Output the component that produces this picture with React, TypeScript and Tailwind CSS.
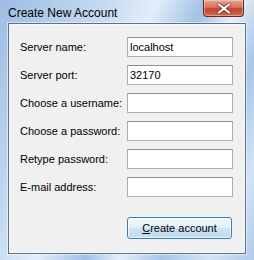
import React from 'react';

const rows: { label: string; value: string }[] = [
  { label: 'Server name:', value: 'localhost' },
  { label: 'Server port:', value: '32170' },
  { label: 'Choose a username:', value: '' },
  { label: 'Choose a password:', value: '' },
  { label: 'Retype password:', value: '' },
  { label: 'E-mail address:', value: '' },
];

const CloseButton = () => (
  <div className="absolute top-0 right-[10px] w-[41px] h-[17px] rounded-b-[4px] border border-t-0 border-[#6b2a22] bg-[linear-gradient(180deg,#e8a392_0%,#d8735f_45%,#c0442c_55%,#cf6a4f_100%)] flex items-center justify-center shadow-[inset_0_0_0_1px_rgba(255,255,255,0.35)]">
    <svg width="14" height="11" viewBox="0 0 14 11">
      <path d="M2 1.5 L12 9.5 M12 1.5 L2 9.5" stroke="#7a3a2e" strokeWidth="3.6" strokeLinecap="round" />
      <path d="M2 1.5 L12 9.5 M12 1.5 L2 9.5" stroke="#ffffff" strokeWidth="2.2" strokeLinecap="round" />
    </svg>
  </div>
);

export default function App() {
  return (
    <div
      className="relative w-[254px] h-[260px] overflow-hidden flex flex-col bg-[linear-gradient(115deg,#9dbde3_0%,#c4d9f1_28%,#e2edf9_42%,#a2c1e5_55%,#e4eef9_64%,#a8c6e8_75%,#d4e4f5_88%,#b0cbeb_100%)]"
      style={{ fontFamily: '"Liberation Sans", Arial, sans-serif' }}
    >
      <div className="h-[23px] shrink-0 flex items-center pl-[8px] pt-[2px] text-[12px] text-black">
        Create New Account
      </div>
      <CloseButton />

      <div className="mx-[8px] flex-1 border border-[#5d6f86] mb-[6px] shadow-[0_0_0_1px_rgba(255,255,255,0.5)]">
        <div className="h-full bg-[#f0f0f0] border border-[#f8f8f8] pt-[12px] pl-[10px] flex flex-col text-[11px] text-black">
          <div className="flex flex-col gap-[8px]">
            {rows.map((r) => (
              <div key={r.label} className="flex items-center h-[20px]">
                <div className="w-[107px]">{r.label}</div>
                <div className="w-[106px] h-[20px] bg-white border border-[#abadb3] border-t-[#8e8f8f] pl-[2px] flex items-center">
                  {r.value}
                </div>
              </div>
            ))}
          </div>
          <div className="mt-[20px] ml-[107px] w-[105px] h-[22px] rounded-[3px] border border-[#3c7fb1] bg-[linear-gradient(180deg,#f2f9fd_0%,#e3eff8_48%,#cde4f3_52%,#bddbee_100%)] shadow-[inset_0_0_0_1px_rgba(255,255,255,0.7)] flex items-center justify-center">
            <span>
              <span className="underline underline-offset-[1px]">C</span>reate account
            </span>
          </div>
        </div>
      </div>
    </div>
  );
}
